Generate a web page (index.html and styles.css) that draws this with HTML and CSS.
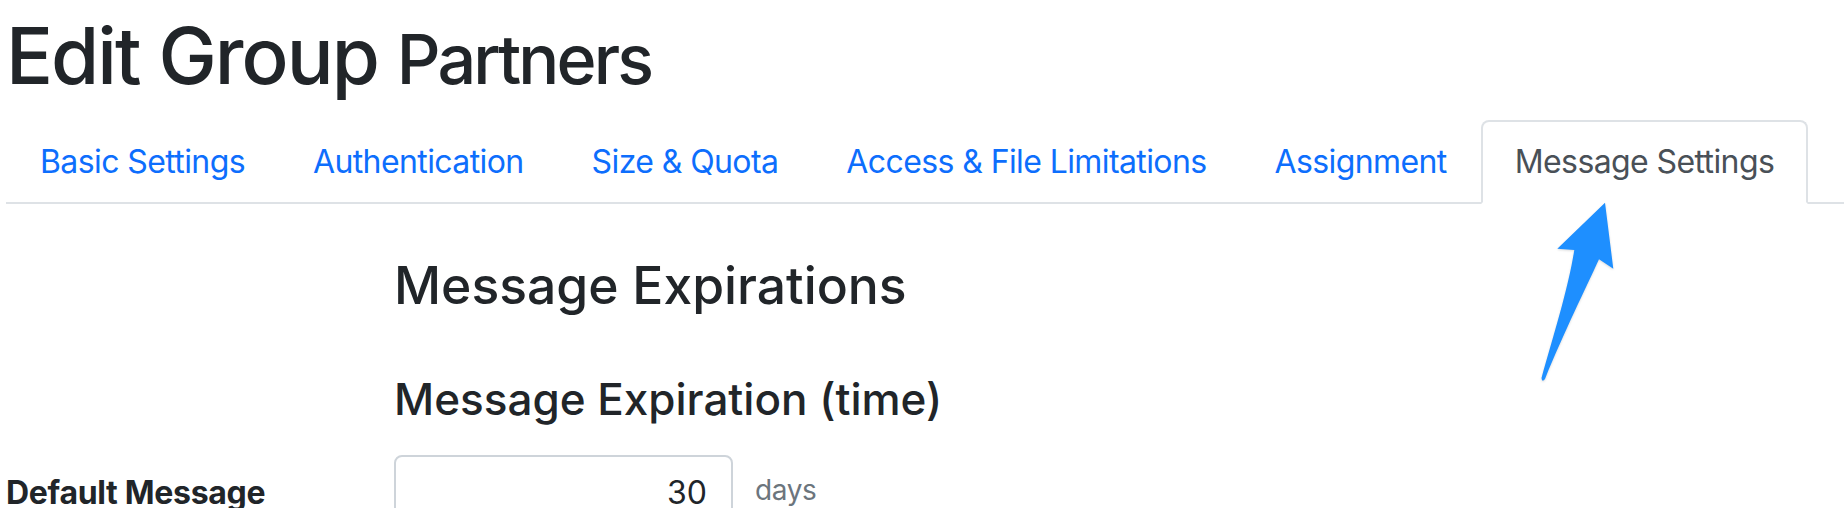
FILE: index.html
```html
<!DOCTYPE html>
<html lang="en">
<head>
<meta charset="utf-8">
<title>Edit Group Partners</title>
<link rel="stylesheet" href="styles.css">
</head>
<body>
<div class="page">
  <h1 class="page-title"><span class="t1">Edit Group</span> <small class="group-name">Partners</small></h1>
  <ul class="tabs">
    <li><a class="tab" href="#">Basic Settings</a></li>
    <li><a class="tab" href="#">Authentication</a></li>
    <li><a class="tab" href="#">Size &amp; Quota</a></li>
    <li><a class="tab" href="#">Access &amp; File Limitations</a></li>
    <li><a class="tab" href="#">Assignment</a></li>
    <li><a class="tab active" href="#">Message Settings</a></li>
  </ul>
  <div class="tab-pane">
    <div class="row">
      <div class="label-col"></div>
      <div class="main-col">
        <h3 class="section-title">Message Expirations</h3>
        <h4 class="sub-title">Message Expiration (time)</h4>
      </div>
    </div>
    <div class="row form-row">
      <label class="label-col form-label" for="exp">Default Message</label>
      <div class="main-col field">
        <input id="exp" class="num-input" type="text" value="30">
        <span class="unit">days</span>
      </div>
    </div>
  </div>
  <svg class="callout" width="200" height="200" viewBox="0 0 200 200" aria-hidden="true">
    <path d="M125 12.7 L133.3 78.7 L119 69.3 C105 100 85 140 65 189 Q62 193 61.5 188 C72 150 88 100 94.3 60 L77.3 58.7 Z" fill="#1e8fff"/>
  </svg>
</div>
</body>
</html>
```
FILE: styles.css
```css
* { box-sizing: border-box; }
html, body { margin: 0; padding: 0; background: #fff; }
body {
  font-family: Inter, "Noto Sans", sans-serif;
  color: #212529;
  font-size: 32px;
  line-height: 1.5;
  letter-spacing: -0.6px;
  overflow: hidden;
}
.page { position: relative; padding: 8px 0 0 6px; }
.page-title {
  margin: 0 0 16px;
  font-size: 78px;
  font-weight: 500;
  line-height: 96px;
  letter-spacing: -1.95px;
  white-space: nowrap;
}
.group-name { font-size: 0.875em; line-height: 1; letter-spacing: -2.9px; }
.tabs {
  display: flex;
  list-style: none;
  margin: 0;
  padding: 0;
  border-bottom: 2px solid #dee2e6;
}
.tabs li { margin-bottom: -2px; flex: none; }
.tab {
  display: block;
  padding: 16px 32px;
  border: 2px solid transparent;
  border-radius: 8px 8px 0 0;
  color: #0d6efd;
  text-decoration: none;
  white-space: nowrap;
}
.tab.active {
  color: #495057;
  background: #fff;
  border-color: #dee2e6 #dee2e6 #fff;
}
.row { display: flex; }
.label-col { width: 388px; flex: none; }
.main-col { flex: 1; }
.section-title {
  margin: 51px 0 0;
  font-size: 51.6px;
  font-weight: 500;
  line-height: 1.2;
  letter-spacing: 0;
}
.sub-title {
  margin: 56px 0 0;
  font-size: 44px;
  font-weight: 500;
  line-height: 1.2;
  letter-spacing: 0;
}
.form-row { margin-top: 29px; }
.form-label { font-weight: 700; padding-top: 14px; white-space: nowrap; letter-spacing: -0.3px; }
.field { display: flex; align-items: flex-start; }
.num-input {
  width: 339px;
  height: 76px;
  padding: 12px 24px;
  border: 2px solid #ced4da;
  border-radius: 8px;
  font: inherit;
  letter-spacing: 0;
  color: #212529;
  text-align: right;
}
.unit {
  color: #6c757d;
  font-size: 28px;
  line-height: 42px;
  letter-spacing: -0.4px;
  margin-left: 22px;
  padding-top: 14.5px;
}
.callout {
  position: absolute;
  left: 1480px;
  top: 190px;
  filter: drop-shadow(0 1px 1px rgba(0,0,0,0.15));
}
```
